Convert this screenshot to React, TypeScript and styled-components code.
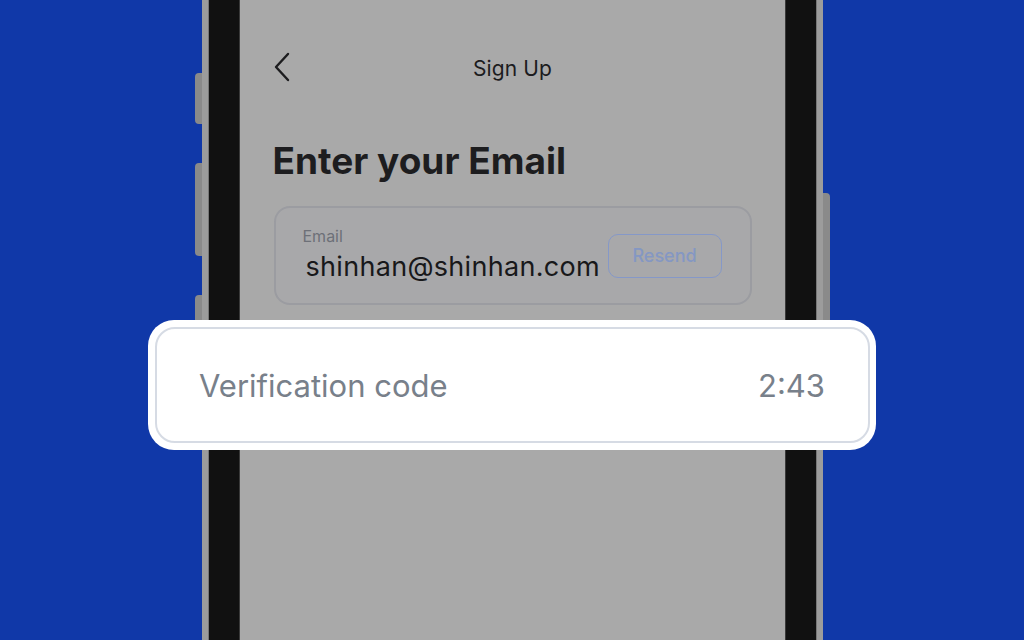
import React from "react";
import styled, { createGlobalStyle } from "styled-components";

const Global = createGlobalStyle`
  html, body {
    margin: 0;
    padding: 0;
    background: #1038a8;
    font-family: Inter, "Noto Sans", sans-serif;
  }
`;

const Stage = styled.div`
  position: relative;
  width: 1024px;
  height: 640px;
  overflow: hidden;
  background: #1038a8;
  display: flex;
  justify-content: center;
`;

const PhoneRow = styled.div`
  display: flex;
  height: 100%;
`;

const SideButtons = styled.div<{ $side: "left" | "right" }>`
  width: 7px;
  display: flex;
  flex-direction: column;
  padding-top: ${(p) => (p.$side === "left" ? "73px" : "193px")};
  gap: ${(p) => (p.$side === "left" ? "39px" : "0")};
`;

const SideButton = styled.div<{ $h: number; $side: "left" | "right" }>`
  height: ${(p) => p.$h}px;
  background: #8a8a8a;
  border-radius: ${(p) => (p.$side === "left" ? "4px 0 0 4px" : "0 4px 4px 0")};
`;

const Frame = styled.div`
  width: 621px;
  height: 100%;
  box-sizing: border-box;
  border-left: 6px solid #9c9c9c;
  border-right: 6px solid #9c9c9c;
  background: #777;
  padding: 0 1px;
  display: flex;
`;

const Bezel = styled.div`
  flex: 1;
  background: #111;
  padding: 0 31px;
  display: flex;
`;

const Screen = styled.div`
  flex: 1;
  background: #a9a9a9;
  box-shadow: -1px 0 0 #3a3a3a, 1px 0 0 #3a3a3a;
  padding: 0 33px 0 34px;
  display: flex;
  flex-direction: column;
`;

const Header = styled.div`
  height: 48px;
  margin-top: 44px;
  display: flex;
  align-items: center;
  justify-content: center;
  position: relative;
`;

const BackButton = styled.div`
  position: absolute;
  left: -1px;
  top: 8px;
  width: 18px;
  height: 30px;
  display: flex;
`;

const Title = styled.div`
  font-size: 21px;
  font-weight: 400;
  color: #1c1c1e;
  letter-spacing: 0.1px;
`;

const Heading = styled.h1`
  margin: 47px 0 0 -1px;
  font-size: 37px;
  line-height: 44px;
  font-weight: 700;
  color: #1d1d1f;
`;

const EmailBox = styled.div`
  margin-top: 23px;
  height: 99px;
  box-sizing: border-box;
  border: 2px solid #9b9ca1;
  border-radius: 16px;
  background: #a8a8aa;
  display: flex;
  align-items: center;
  padding: 0 28px 0 27px;
`;

const EmailTexts = styled.div`
  flex: 1;
  display: flex;
  flex-direction: column;
  margin-top: -2px;
`;

const EmailLabel = styled.div`
  font-size: 16px;
  line-height: 20px;
  color: #6d7078;
`;

const EmailValue = styled.div`
  margin: 4px 0 0 3px;
  font-size: 27px;
  line-height: 34px;
  color: #18181a;
  letter-spacing: 0.3px;
`;

const ResendButton = styled.div`
  width: 114px;
  height: 44px;
  box-sizing: border-box;
  border: 1.5px solid #8598c8;
  border-radius: 10px;
  display: flex;
  align-items: center;
  justify-content: center;
  font-size: 18px;
  font-weight: 500;
  color: #8497c3;
  margin-top: 0;
`;

const CodeCard = styled.div`
  position: absolute;
  left: 148px;
  top: 320px;
  width: 728px;
  height: 130px;
  box-sizing: border-box;
  background: #fff;
  border-radius: 26px;
  padding: 7px 6px 7px 7px;
  display: flex;
`;

const CodeField = styled.div`
  flex: 1;
  border: 2px solid #d6dbe4;
  border-radius: 20px;
  display: flex;
  align-items: center;
  justify-content: space-between;
  padding: 0 43px 0 42px;
  color: #78808a;
  font-size: 31px;
`;

export default function App() {
  return (
    <>
      <Global />
      <Stage>
        <PhoneRow>
          <SideButtons $side="left">
            <SideButton $side="left" $h={51} />
            <SideButton $side="left" $h={93} />
            <SideButton $side="left" $h={93} />
          </SideButtons>
          <Frame>
            <Bezel>
              <Screen>
                <Header>
                  <BackButton>
                    <svg width="18" height="30" viewBox="0 0 18 30" fill="none">
                      <path
                        d="M15 2 L3 15 L15 28"
                        stroke="#1c1c1e"
                        strokeWidth="2.4"
                        strokeLinecap="round"
                        strokeLinejoin="round"
                      />
                    </svg>
                  </BackButton>
                  <Title>Sign Up</Title>
                </Header>
                <Heading>Enter your Email</Heading>
                <EmailBox>
                  <EmailTexts>
                    <EmailLabel>Email</EmailLabel>
                    <EmailValue>shinhan@shinhan.com</EmailValue>
                  </EmailTexts>
                  <ResendButton>Resend</ResendButton>
                </EmailBox>
              </Screen>
            </Bezel>
          </Frame>
          <SideButtons $side="right">
            <SideButton $side="right" $h={160} />
          </SideButtons>
        </PhoneRow>
        <CodeCard>
          <CodeField>
            <span>Verification code</span>
            <span>2:43</span>
          </CodeField>
        </CodeCard>
      </Stage>
    </>
  );
}
